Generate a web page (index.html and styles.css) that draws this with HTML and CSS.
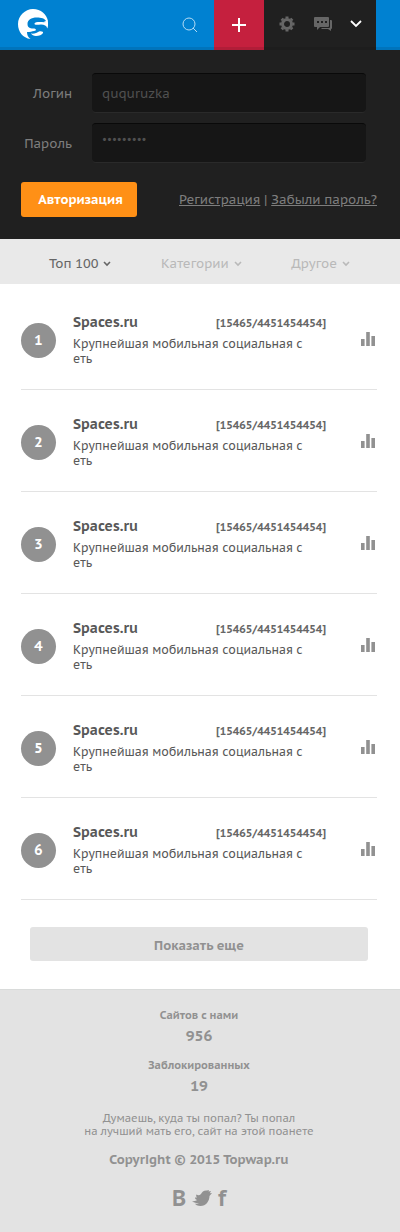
FILE: index.html
```
<!DOCTYPE html>
<html lang="ru">
<head>
  <meta charset="UTF-8">
  <meta name="viewport" content="width=device-width, initial-scale=1.0">
  <title>Topwap.ru</title>
  <link rel="stylesheet" href="styles.css">
</head>
<body>
  <svg class="sprite" aria-hidden="true">
    <symbol id="stat" viewBox="0 0 14 14">
      <path d="M0 7h3.600v7H0zM5.200 0h3.600v14H5.200zM10.400 4H14v10h-3.600z"/>
    </symbol>
    <symbol id="arrow" viewBox="0 0 8 6">
      <path d="M1 1l3 3 3-3" fill="none" stroke="currentColor" stroke-width="1.6"/>
    </symbol>
  </svg>

  <header class="header">
    <a class="logo" href="#" aria-label="Spaces">
      <svg width="30" height="30" viewBox="0 0 30 30" fill="#fff">
        <path d="M15 0C23 0 28.500 5 30 12L29.500 15C28.500 14 27 13.500 25 13.300L28 12C27 9.500 23 8.500 19 8.500C13 8.500 9.500 11 9.500 15C9.500 18.500 12 19.500 15 19.500C18.500 19.500 19 21.500 16 22C14 22.500 12 23 9 23C9 26 10 28 12.500 30C5 29 0 23 0 15C0 7 7 0 15 0Z"/>
        <path d="M16.500 14.500C17 12.800 21 12.800 24 13C26 13.300 28 13.500 30 13C30.300 15.500 30 18 29.300 19.500C28.500 16.500 26.500 15.500 23 15.500C20 15.500 16 16.500 16.500 14.500Z"/>
        <path d="M13 24.500C16 25 19 24 21 22.500C24 22 25.500 23 25 24C24 26 21 27 18 27C15.500 27 14 26 13 24.500Z"/>
      </svg>
    </a>
    <button class="search" type="button" aria-label="Поиск">
      <svg width="16" height="16" viewBox="0 0 16 16" fill="none" stroke="#b5dcf5">
        <circle cx="7" cy="7" r="6"/>
        <path d="M11 11l4 4"/>
      </svg>
    </button>
    <button class="add" type="button" aria-label="Добавить">
      <svg width="16" height="16" viewBox="0 0 16 16" stroke="#fff" stroke-width="2">
        <path d="M8 1v14M1 8h14"/>
      </svg>
    </button>
    <nav class="tools">
      <a href="#" aria-label="Настройки">
        <svg width="16" height="16" viewBox="0 0 16 16" fill="none" stroke="#666">
          <circle cx="8" cy="8" r="4.500" stroke-width="3"/>
          <path stroke-width="3" d="M8 .5v2M8 13.500v2M.5 8h2M13.500 8h2M2.700 2.700l1.400 1.400M11.900 11.900l1.400 1.400M13.300 2.700l-1.400 1.400M4.100 11.900l-1.400 1.400"/>
        </svg>
      </a>
      <a href="#" aria-label="Сообщения">
        <svg width="18" height="14" viewBox="0 0 18 14" fill="#666">
          <path d="M1 0h13q1 0 1 1v8q0 1-1 1H6l-3 3v-3H1q-1 0-1-1V1q0-1 1-1z"/>
          <path d="M16 3h1q1 0 1 1v7q0 1-1 1v2l-3-2H7l1-1h7q1 0 1-1z"/>
          <path d="M3 4h2v2H3zM7 4h2v2H7zM11 4h2v2h-2z" fill="#202020"/>
        </svg>
      </a>
      <a href="#" aria-label="Меню">
        <svg width="12" height="8" viewBox="0 0 12 8" fill="none" stroke="#fff" stroke-width="1.800">
          <path d="M1 1l5 5 5-5"/>
        </svg>
      </a>
    </nav>
  </header>

  <form class="login">
    <div class="field">
      <label for="login">Логин</label>
      <input type="text" id="login" value="ququruzka">
    </div>
    <div class="field">
      <label for="password">Пароль</label>
      <input type="password" id="password" value="ququruzka">
    </div>
    <div class="login-bottom">
      <button type="submit">Авторизация</button>
      <p><a href="#">Регистрация</a> | <a href="#">Забыли пароль?</a></p>
    </div>
  </form>

  <nav class="tabs">
    <a class="active" href="#">Топ 100 <svg width="8" height="6"><use href="#arrow"/></svg></a>
    <a href="#">Категории <svg width="8" height="6"><use href="#arrow"/></svg></a>
    <a href="#">Другое <svg width="8" height="6"><use href="#arrow"/></svg></a>
  </nav>

  <main>
    <ol class="sites">
      <li>
        <span class="num">1</span>
        <div class="info">
          <h2><a href="#">Spaces.ru</a></h2>
          <span class="count">[15465/4451454454]</span>
          <p>Крупнейшая мобильная социальная с<br>еть</p>
        </div>
        <a class="stat" href="#" aria-label="Статистика"><svg width="14" height="14"><use href="#stat"/></svg></a>
      </li>
      <li>
        <span class="num">2</span>
        <div class="info">
          <h2><a href="#">Spaces.ru</a></h2>
          <span class="count">[15465/4451454454]</span>
          <p>Крупнейшая мобильная социальная с<br>еть</p>
        </div>
        <a class="stat" href="#" aria-label="Статистика"><svg width="14" height="14"><use href="#stat"/></svg></a>
      </li>
      <li>
        <span class="num">3</span>
        <div class="info">
          <h2><a href="#">Spaces.ru</a></h2>
          <span class="count">[15465/4451454454]</span>
          <p>Крупнейшая мобильная социальная с<br>еть</p>
        </div>
        <a class="stat" href="#" aria-label="Статистика"><svg width="14" height="14"><use href="#stat"/></svg></a>
      </li>
      <li>
        <span class="num">4</span>
        <div class="info">
          <h2><a href="#">Spaces.ru</a></h2>
          <span class="count">[15465/4451454454]</span>
          <p>Крупнейшая мобильная социальная с<br>еть</p>
        </div>
        <a class="stat" href="#" aria-label="Статистика"><svg width="14" height="14"><use href="#stat"/></svg></a>
      </li>
      <li>
        <span class="num">5</span>
        <div class="info">
          <h2><a href="#">Spaces.ru</a></h2>
          <span class="count">[15465/4451454454]</span>
          <p>Крупнейшая мобильная социальная с<br>еть</p>
        </div>
        <a class="stat" href="#" aria-label="Статистика"><svg width="14" height="14"><use href="#stat"/></svg></a>
      </li>
      <li>
        <span class="num">6</span>
        <div class="info">
          <h2><a href="#">Spaces.ru</a></h2>
          <span class="count">[15465/4451454454]</span>
          <p>Крупнейшая мобильная социальная с<br>еть</p>
        </div>
        <a class="stat" href="#" aria-label="Статистика"><svg width="14" height="14"><use href="#stat"/></svg></a>
      </li>
    </ol>
    <button class="more" type="button">Показать еще</button>
  </main>

  <footer class="footer">
    <dl>
      <dt>Сайтов с нами</dt>
      <dd>956</dd>
      <dt>Заблокированных</dt>
      <dd>19</dd>
    </dl>
    <p class="about">Думаешь, куда ты попал? Ты попал<br>на лучший мать его, сайт на этой поанете</p>
    <p class="copy">Copyright © 2015 Topwap.ru</p>
    <div class="social">
      <a href="#" aria-label="ВКонтакте">B</a>
      <a href="#" aria-label="Twitter">
        <svg width="20" height="16" viewBox="0 0 20 16" fill="#919191">
          <path d="M0 11C2 11.500 4 11 5 10C3.500 9.500 3 8.500 3 7.500L5 7.500C4 6.500 4 5 4.500 4.500C6 5.500 7.500 5.500 9 4C10 2 12 0 15 0.500L17 0L16.500 1.500L19 1L17.800 3.200L20 3L17.500 6C17.500 11 14 16 8.500 16C5.500 16 3.500 15 3 13.500C4.500 14 6 13.500 7 13C4 13.200 1.500 12.500 0 11Z"/>
        </svg>
      </a>
      <a href="#" aria-label="Facebook">f</a>
    </div>
  </footer>
</body>
</html>
```
FILE: styles.css
```
* {
  box-sizing: border-box;
}
body {
  margin: 0;
  background-color: #fff;
  color: #585858;
  font-family: "PT Sans Caption", "Noto Sans", sans-serif;
  font-size: 13px;
}
a {
  color: inherit;
  text-decoration: none;
}
button, input {
  font: inherit;
  border: 0;
}
button {
  padding: 0;
  cursor: pointer;
}
svg {
  display: block;
}
p, h2, dl, dd, ol {
  margin: 0;
  padding: 0;
}
.sprite {
  display: none;
}

/* header */
.header {
  display: flex;
  height: 50px;
  padding: 0 24px 0 18px;
  background-color: #0081d1;
  box-shadow: inset 0 -3px #0074bc;
}
.logo {
  margin-right: auto;
  padding-top: 9px;
}
.search, .add {
  display: flex;
  justify-content: center;
  align-items: center;
  width: 48px;
  background: none;
}
.add {
  width: 50px;
  background-color: #c5203e;
  box-shadow: inset 0 -3px #b11d38;
}
.tools {
  display: flex;
  justify-content: space-between;
  align-items: center;
  width: 112px;
  padding: 0 14px 2px 15px;
  background-color: #202020;
  box-shadow: inset 0 -3px #1d1d1d;
}

/* login form */
.login {
  padding: 23px 23px 22px 21px;
  background-color: #202020;
  color: #7d7d7d;
}
.field {
  display: flex;
  align-items: center;
  gap: 20px;
  margin: 0 11px 10px 0;
}
.field label {
  width: 51px;
  text-align: right;
}
.field input {
  flex: 1;
  min-width: 0;
  height: 40px;
  padding: 0 10px;
  border-top: 1px solid #090909;
  border-bottom: 1px solid #2a2a2a;
  border-radius: 4px;
  background-color: #161616;
  color: #505050;
}
.field input[type="password"] {
  padding-bottom: 7px;
  font-size: 10px;
}
.login-bottom {
  display: flex;
  justify-content: space-between;
  align-items: center;
  margin-top: 19px;
}
.login-bottom button {
  width: 116px;
  height: 35px;
  padding-left: 3px;
  border-radius: 3px;
  background-color: #ff9016;
  color: #fff;
  font-weight: bold;
}
.login-bottom a {
  text-decoration: underline;
}

/* tabs */
.tabs {
  display: flex;
  justify-content: space-between;
  align-items: center;
  height: 45px;
  padding: 4px 50px 0 49px;
  background-color: #e9e9e9;
  color: #b9b9b9;
}
.tabs a {
  display: flex;
  align-items: center;
  gap: 5px;
}
.tabs .active {
  color: #666;
}

/* list of sites */
main {
  padding: 4px 23px 28px 21px;
}
.sites {
  list-style: none;
}
.sites li {
  display: flex;
  align-items: center;
  height: 102px;
  border-bottom: 1px solid #e3e3e3;
}
.num {
  width: 35px;
  height: 35px;
  margin-top: 3px;
  border-radius: 50%;
  background-color: #919191;
  color: #fff;
  font-size: 14px;
  font-weight: bold;
  line-height: 35px;
  text-align: center;
}
.info {
  display: grid;
  grid-template-columns: 1fr auto;
  align-items: center;
  flex: 1;
  margin: 0 35px 0 17px;
}
.info h2 {
  padding-bottom: 3px;
  font-size: 14px;
  line-height: 21px;
}
.count {
  padding-bottom: 1px;
  color: #666;
  font-size: 11px;
  font-weight: bold;
}
.info p {
  grid-column: 1 / -1;
  font-size: 12px;
  line-height: 15px;
  white-space: nowrap;
}
.stat {
  margin-right: 2px;
  fill: #919191;
}
.more {
  display: block;
  width: calc(100% - 18px);
  height: 34px;
  margin: 27px 9px 0;
  padding-top: 2px;
  border-radius: 3px;
  background-color: #e3e3e3;
  color: #919191;
  font-weight: bold;
}

/* footer */
.footer {
  padding: 15px 2px 22px 0;
  border-top: 1px solid #d9dbda;
  background-color: #e3e3e3;
  color: #919191;
  text-align: center;
}
.footer dt {
  font-size: 11px;
  font-weight: bold;
  line-height: 20px;
}
.footer dd {
  margin-bottom: 8px;
  font-size: 15px;
  font-weight: bold;
  line-height: 22px;
}
.about {
  margin-top: 15px;
  font-size: 11px;
  line-height: 13px;
}
.copy {
  margin-top: 12px;
  font-weight: bold;
  line-height: 20px;
}
.social {
  display: flex;
  justify-content: center;
  align-items: center;
  gap: 6px;
  margin-top: 16px;
  font-size: 22px;
  font-weight: bold;
  line-height: 24px;
}
```
